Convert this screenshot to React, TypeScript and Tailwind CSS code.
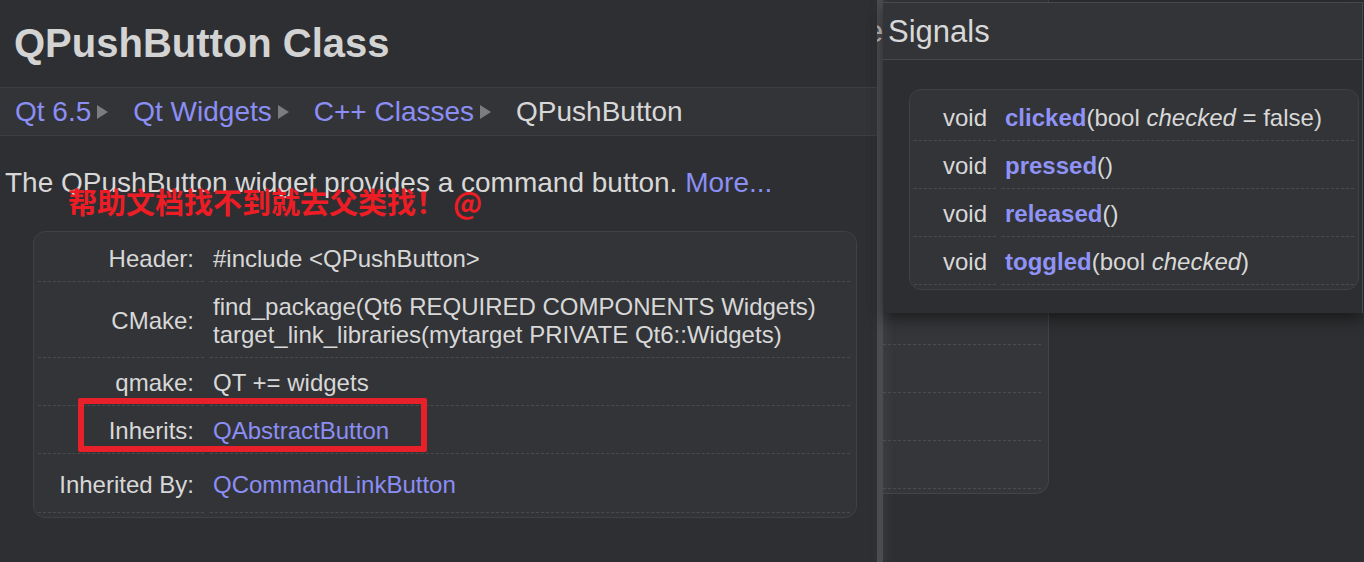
import React from 'react';

const sans = "font-['Liberation_Sans',Arial,sans-serif]";

function Arrow() {
  return (
    <svg width="11" height="14" viewBox="0 0 11 14" className="ml-[6px] mr-[25px] shrink-0">
      <polygon points="0,0 11,7 0,14" fill="#7b7c7f" />
    </svg>
  );
}

const infoRows = [
  { label: 'Header:', value: <span>#include &lt;QPushButton&gt;</span>, pad: 'pt-[13px] pb-[8px]' },
  {
    label: 'CMake:',
    value: (
      <span>
        find_package(Qt6 REQUIRED COMPONENTS Widgets)
        <br />
        target_link_libraries(mytarget PRIVATE Qt6::Widgets)
      </span>
    ),
    pad: 'pt-[11px] pb-[8px]',
  },
  { label: 'qmake:', value: <span>QT += widgets</span>, pad: 'pt-[11px] pb-[8px]' },
  { label: 'Inherits:', value: <span className="text-[#8b8ef5]">QAbstractButton</span>, pad: 'pt-[11px] pb-[8px]' },
  { label: 'Inherited By:', value: <span className="text-[#8b8ef5]">QCommandLinkButton</span>, pad: 'pt-[17px] pb-[13px]' },
];

const signals = [
  { name: 'clicked', args: <>(bool <i>checked</i> = false)</> },
  { name: 'pressed', args: <>()</> },
  { name: 'released', args: <>()</> },
  { name: 'toggled', args: <>(bool <i>checked</i>)</> },
];

function DocPage() {
  return (
    <div className="relative w-[877px] shrink-0 h-full bg-[#2e2f32]">
      <div className="h-[87px] flex items-center pl-[14px] pb-[2px]">
        <h1 className="text-[40px] font-bold text-[#d3d3d3] leading-none">QPushButton Class</h1>
      </div>

      <div className="h-[49px] border-y border-[#3e3f42] bg-[#333437] flex items-center pl-[15px] text-[28px] leading-none">
        <span className="text-[#8b8ef5]">Qt 6.5</span>
        <Arrow />
        <span className="text-[#8b8ef5]">Qt Widgets</span>
        <Arrow />
        <span className="text-[#8b8ef5]">C++ Classes</span>
        <Arrow />
        <span className="text-[#d8d8d8]">QPushButton</span>
      </div>

      <p className="mt-[31px] pl-[5px] text-[28px] leading-[32px] text-[#d8d8d8]">
        The QPushButton widget provides a command button. <span className="text-[#8b8ef5]">More...</span>
      </p>

      <div className="mt-[32px] ml-[33px] w-[824px] rounded-[12px] border border-[#404144] bg-[#333437] pl-[4px] pr-[6px] pb-[4px] text-[24px] leading-[28px] text-[#d8d8d8]">
        <div className="grid grid-cols-[166px_1fr] gap-x-[6px]">
          {infoRows.map((row) => (
            <React.Fragment key={row.label}>
              <div className={`flex items-center justify-end pr-[10px] border-b border-dashed border-[#4a4b4e] ${row.pad}`}>
                {row.label}
              </div>
              <div className={`pl-[3px] border-b border-dashed border-[#4a4b4e] ${row.pad}`}>{row.value}</div>
            </React.Fragment>
          ))}
        </div>
      </div>

      <div className="absolute left-[68px] top-[187px] text-[29px] leading-none font-bold text-[#ee1d25] font-['Noto_Sans_CJK_SC',sans-serif] whitespace-nowrap">
        帮助文档找不到就去父类找！<span className="ml-[8px]">@</span>
      </div>

      <div className="absolute left-[78px] top-[398px] w-[349px] h-[54px] border-[6px] border-[#e8202a] rounded-[2px]" />
    </div>
  );
}

function SignalsPopup() {
  return (
    <div className="absolute z-20 left-0 top-[2px] w-[480px] h-[311px] flex flex-col border-t border-r border-[#48494c] bg-[#2d2e31] shadow-[0_6px_14px_rgba(0,0,0,0.45)]">
      <div className="relative h-[57px] shrink-0 border-b border-[#46474a] bg-[#333437] flex items-center pl-[5px]">
        <div className="absolute left-[-6px] top-[13px] w-[6px] overflow-hidden">
          <span className="block -ml-[11px] text-[31px] leading-none text-[#a0a0a0]">e</span>
        </div>
        <span className="text-[31px] leading-none text-[#d8d8d8]">Signals</span>
      </div>
      <div className="pt-[29px] pl-[26px]">
        <div className="w-[450px] rounded-[12px] border border-[#404144] bg-[#333437] pl-[4px] pr-[4px] pb-[4px] text-[24px] leading-[28px] text-[#d8d8d8]">
          <div className="grid grid-cols-[82px_1fr] gap-x-[6px]">
            {signals.map((s, i) => {
              const pad = i === 0 ? 'pt-[14px] pb-[8px]' : 'pt-[11px] pb-[8px]';
              return (
                <React.Fragment key={s.name}>
                  <div className={`text-right pr-[9px] border-b border-dashed border-[#4a4b4e] ${pad}`}>void</div>
                  <div className={`pl-[3px] border-b border-dashed border-[#4a4b4e] whitespace-nowrap ${pad}`}>
                    <b className="text-[#8f92f6]">{s.name}</b>
                    {s.args}
                  </div>
                </React.Fragment>
              );
            })}
          </div>
        </div>
      </div>
    </div>
  );
}

export default function App() {
  return (
    <div className={`w-[1364px] h-[562px] overflow-hidden flex bg-[#2e2f32] ${sans}`}>
      <DocPage />
      <div className="w-[6px] shrink-0 h-full bg-[#4b4c4f] relative z-10 shadow-[3px_0_8px_rgba(90,91,94,0.35)]" />
      <div className="relative flex-1 h-full bg-[#2e2f32]">
        <div className="w-[166px] h-[494px] rounded-br-[14px] border-r border-b border-[#434447] bg-[#353639] pb-[4px]">
          <div className="h-[297px]" />
          {[0, 1, 2, 3].map((i) => (
            <div key={i} className="h-[48px] border-b border-dashed border-[#4b4c4f] mr-[7px]" />
          ))}
        </div>
        <SignalsPopup />
      </div>
    </div>
  );
}
